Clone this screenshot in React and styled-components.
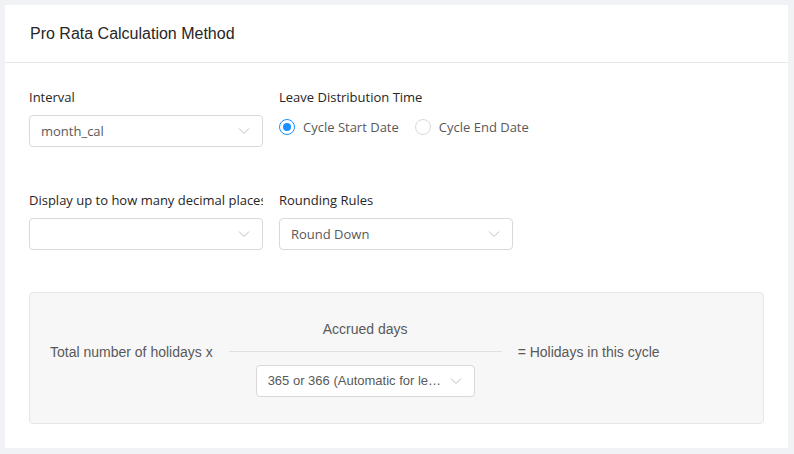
import React from 'react';
import styled, { createGlobalStyle } from 'styled-components';

const GlobalStyle = createGlobalStyle`
  html, body {
    margin: 0;
    padding: 0;
    background: #f0f2f5;
  }
  * {
    box-sizing: border-box;
  }
`;

// #region Styles

const Page = styled.div`
  padding: 5px 6px 6px 5px;
  font-family: "Open Sans", "Noto Sans", sans-serif;
`;

const Card = styled.div`
  background: #fff;
`;

const CardHeader = styled.div`
  height: 58px;
  padding: 0 25px;
  display: flex;
  align-items: center;
  border-bottom: 1px solid #e8e8e8;
`;

const CardTitle = styled.h2`
  margin: 0;
  font-family: "Liberation Sans", Arial, sans-serif;
  font-size: 16px;
  font-weight: 400;
  color: #262626;
`;

const CardBody = styled.div`
  padding: 24px 24px 24px 24px;
`;

const FormGrid = styled.div`
  display: grid;
  grid-template-columns: 234px 234px;
  column-gap: 16px;
  row-gap: 43px;
`;

const FormItem = styled.div`
  display: flex;
  flex-direction: column;
  min-width: 0;
`;

const Label = styled.label`
  display: block;
  height: 20px;
  line-height: 20px;
  margin-bottom: 8px;
  font-size: 13px;
  color: #262626;
  white-space: nowrap;
  overflow: hidden;
`;

const SelectBox = styled.div`
  display: flex;
  align-items: center;
  width: ${(p) => p.width || '100%'};
  height: 32px;
  padding: 0 11px;
  background: #fff;
  border: 1px solid #d9d9d9;
  border-radius: 4px;
  font-size: 13px;
  color: #595959;
`;

const SelectValue = styled.span`
  flex: 1;
  min-width: 0;
  line-height: 20px;
  white-space: nowrap;
  overflow: hidden;
  text-overflow: ellipsis;
`;

const Chevron = styled.svg`
  flex: none;
  width: 12px;
  height: 8px;
  margin-left: 8px;
  margin-right: 1px;
`;

const RadioGroup = styled.div`
  display: flex;
  align-items: center;
  height: 32px;
  margin-top: -4px;
  gap: 16px;
`;

const RadioOption = styled.label`
  display: flex;
  align-items: center;
  gap: 8px;
  font-size: 13px;
  color: #595959;
  white-space: nowrap;
  cursor: pointer;
`;

const RadioCircle = styled.span`
  position: relative;
  flex: none;
  width: 16px;
  height: 16px;
  border-radius: 50%;
  border: 1px solid ${(p) => (p.checked ? '#1890ff' : '#d9d9d9')};
  background: #fff;
  &::after {
    content: '';
    display: ${(p) => (p.checked ? 'block' : 'none')};
    position: absolute;
    top: 3px;
    left: 3px;
    width: 8px;
    height: 8px;
    border-radius: 50%;
    background: #1890ff;
  }
`;

const FormulaBox = styled.div`
  margin-top: 42px;
  height: 132px;
  padding: 26px 20px;
  display: flex;
  align-items: flex-start;
  gap: 16px;
  background: #f7f7f7;
  border: 1px solid #e6e6e6;
  border-radius: 4px;
  font-family: "Liberation Sans", Arial, sans-serif;
  font-size: 14px;
  color: #595959;
`;

const FormulaText = styled.span`
  padding-top: 23px;
  line-height: 20px;
  white-space: nowrap;
`;

const Fraction = styled.div`
  width: 273px;
  flex: none;
  display: flex;
  flex-direction: column;
  align-items: center;
`;

const Numerator = styled.div`
  height: 20px;
  line-height: 20px;
`;

const FractionLine = styled.div`
  align-self: stretch;
  height: 1px;
  margin: 12px 0 13px;
  background: #e0e0e0;
`;

// #endregion

function ChevronIcon() {
  return (
    <Chevron viewBox="0 0 12 8">
      <polyline points="1,1.5 6,6.5 11,1.5" fill="none" stroke="#bfbfbf" strokeWidth="1" />
    </Chevron>
  );
}

function Select({ value, width }) {
  return (
    <SelectBox width={width}>
      <SelectValue>{value}</SelectValue>
      <ChevronIcon />
    </SelectBox>
  );
}

export default function App() {
  return (
    <>
      <GlobalStyle />
      <Page>
        <Card>
          <CardHeader>
            <CardTitle>Pro Rata Calculation Method</CardTitle>
          </CardHeader>
          <CardBody>
            <FormGrid>
              <FormItem>
                <Label>Interval</Label>
                <Select value="month_cal" />
              </FormItem>
              <FormItem>
                <Label>Leave Distribution Time</Label>
                <RadioGroup>
                  <RadioOption>
                    <RadioCircle checked />
                    Cycle Start Date
                  </RadioOption>
                  <RadioOption>
                    <RadioCircle />
                    Cycle End Date
                  </RadioOption>
                </RadioGroup>
              </FormItem>
              <FormItem>
                <Label>Display up to how many decimal places</Label>
                <Select value="" />
              </FormItem>
              <FormItem>
                <Label>Rounding Rules</Label>
                <Select value="Round Down" />
              </FormItem>
            </FormGrid>
            <FormulaBox>
              <FormulaText>Total number of holidays x</FormulaText>
              <Fraction>
                <Numerator>Accrued days</Numerator>
                <FractionLine />
                <Select width="219px" value="365 or 366 (Automatic for leap years)" />
              </Fraction>
              <FormulaText>= Holidays in this cycle</FormulaText>
            </FormulaBox>
          </CardBody>
        </Card>
      </Page>
    </>
  );
}
